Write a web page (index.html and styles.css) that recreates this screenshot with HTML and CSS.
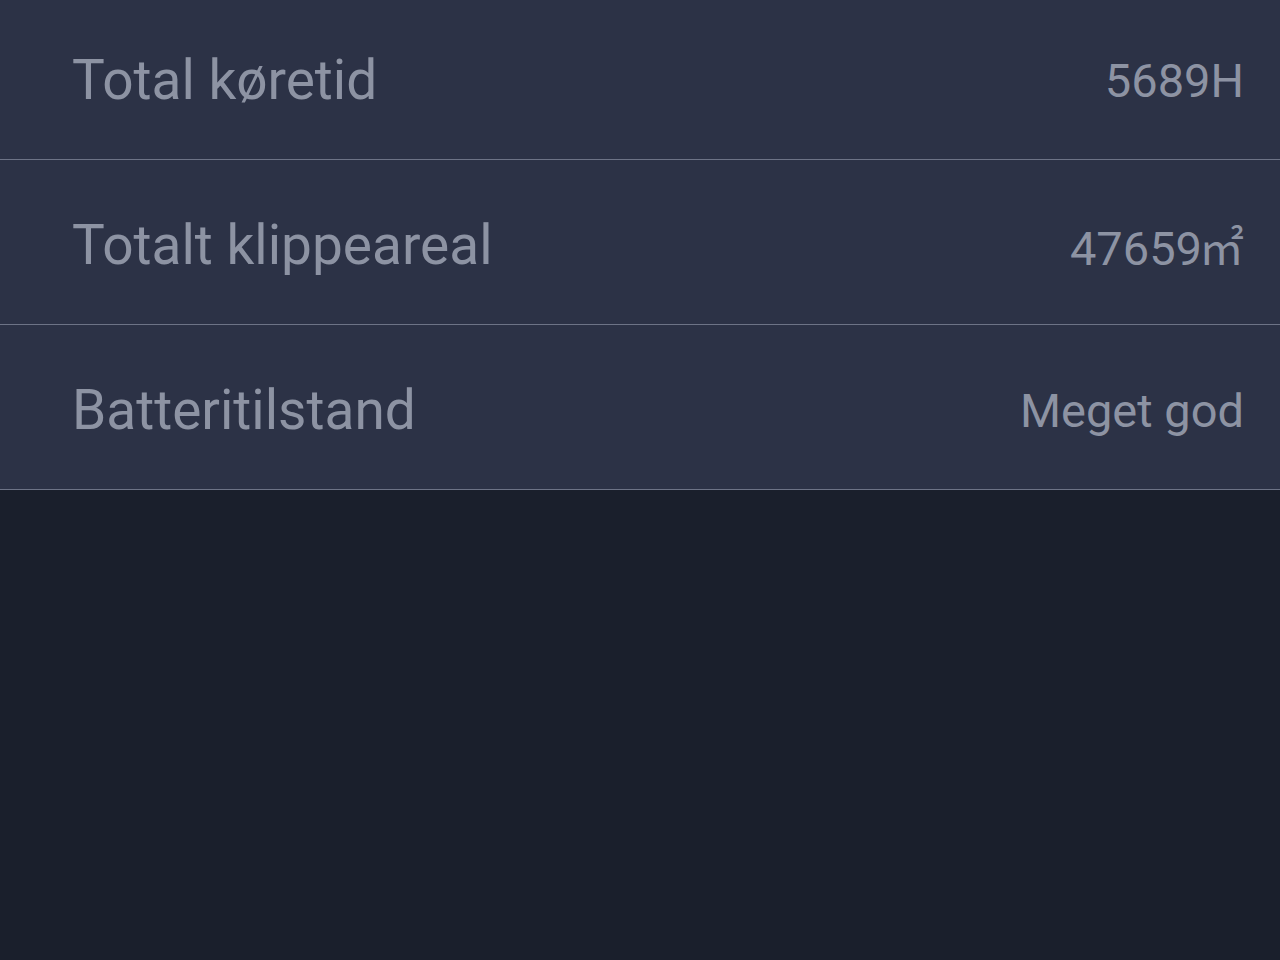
FILE: index.html
```html
<!DOCTYPE html>
<html lang="da">
<head>
    <meta charset="UTF-8">
    <meta name="viewport" content="width=device-width, initial-scale=1.0">
    <title>Statistik</title>
    <link rel="stylesheet" href="styles.css">
</head>
<body>
    <ul class="stats">
        <li class="stat-row">
            <span class="stat-label">Total køretid</span>
            <span class="stat-value">5689H</span>
        </li>
        <li class="stat-row">
            <span class="stat-label">Totalt klippeareal</span>
            <span class="stat-value">47659<span class="unit">㎡</span></span>
        </li>
        <li class="stat-row">
            <span class="stat-label">Batteritilstand</span>
            <span class="stat-value">Meget god</span>
        </li>
    </ul>
</body>
</html>
```

FILE: styles.css
```css
html,
body {
	margin: 0;
	padding: 0;
	height: 100%;
	background-color: #1a1f2c;
	font-family: Roboto, "Noto Sans", sans-serif;
	color: #8d93a3;
	overflow: hidden;
}

.stats {
	list-style: none;
	margin: -5px 0 0 0; /* top row is partly scrolled away */
	padding: 0;
	background-color: #2c3246;
}

.stat-row {
	height: 165px;
	display: flex;
	align-items: center;
	justify-content: space-between;
	padding: 6px 36px 0 72px;
	box-sizing: border-box;
	border-bottom: 1px solid #6d7386;
}

.stat-label {
	font-size: 55px;
}

.stat-value {
	font-size: 47px;
}

.unit {
	font-family: "Noto Sans CJK SC", sans-serif;
	font-size: 45px;
	margin-left: -3px;
}
```
